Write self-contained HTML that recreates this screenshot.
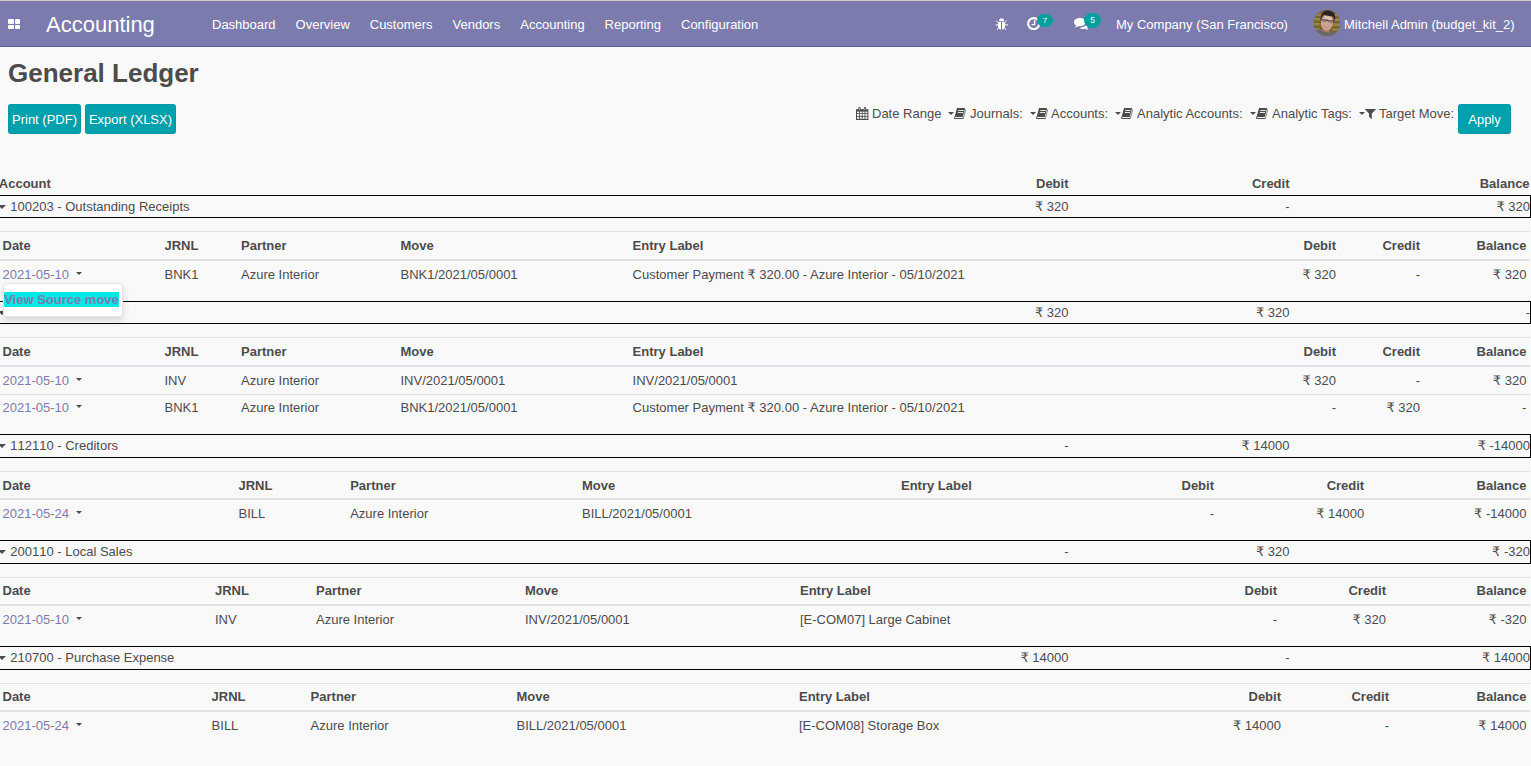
<!DOCTYPE html>
<html lang="en">
<head>
<meta charset="utf-8">
<title>General Ledger</title>
<style>
*{box-sizing:border-box}
html,body{margin:0;padding:0}
body{width:1531px;height:766px;overflow:hidden;background:#f9f9f9;color:#4c4c4c;
 font-family:"Liberation Sans",sans-serif;font-size:13px;line-height:19.5px;position:relative}
a{text-decoration:none;color:#7C7BAD}
/* navbar */
.topline{position:absolute;left:0;top:0;width:1531px;height:1px;background:#cfccc4}
.nav{position:absolute;left:0;top:1px;width:1531px;height:46px;background:#7C7BAD;border-bottom:1px solid #5f5e97;color:#fff}
.nav .it{position:absolute;top:1px;height:45px;line-height:46px;white-space:nowrap;color:#fff}
.nav .brand{font-size:22px;left:46px}
.apps{position:absolute;left:8px;top:18px;width:12px;height:11px}
.apps i{position:absolute;width:5.5px;height:4.6px;background:#fff;border-radius:1px}
.badge{position:absolute;border-radius:7px;background:#00A09D;color:#fff;text-align:center;padding:0}
.avatar{position:absolute;left:1314px;top:9px;width:26px;height:26px;border-radius:50%;overflow:hidden;background:#7a5a3c}
/* header */
h1{position:absolute;left:8px;top:58px;margin:0;font-size:26px;line-height:31px;font-weight:bold;color:#4c4c4c;white-space:nowrap}
.btn{position:absolute;top:104px;height:30px;background:#00A0AD;border:1px solid #0098A5;border-radius:2.400px;color:#fff;font-size:13px;line-height:30px;text-align:center;white-space:nowrap}
.flt{position:absolute;top:104px;height:19px;line-height:19px;white-space:nowrap;color:#4c4c4c}
.caret{position:absolute;width:0;height:0;border-left:3.1px solid transparent;border-right:3.1px solid transparent;border-top:3.4px solid #4c4c4c}
.ico{position:absolute}
u{font-family:"DejaVu Sans",sans-serif;text-decoration:none}
/* main table */
.mh{position:absolute;left:0;width:1531px;height:20px;font-weight:bold;line-height:19.5px}
.mh span,.acc span,.sh span,.sr span{position:absolute;top:0;white-space:nowrap}
.acc{position:absolute;left:-1px;width:1532px;border:1px solid #000;line-height:19.5px}
.acc span{top:1px}
.acc .caret{left:-1.600px;top:8.500px;border-left-width:4.100px;border-right-width:4.100px;border-top-width:4.700px}
.acc .nk{font-kerning:none}
.sr.bt span{top:3.300px}
.r{text-align:right}
.sh{position:absolute;left:0;width:1529.500px;border-top:1px solid #dee2e6;border-bottom:2px solid #dee2e6;font-weight:bold;line-height:19.5px}
.sh span{top:4.100px}
.sr{position:absolute;left:0;width:1529.500px;height:27px;line-height:19.5px}
.sr span{top:4.300px}
.sr.bt{border-top:1px solid #dee2e6;height:28px}
.sr a .c{display:inline-block;width:0;height:0;border-left:3.050px solid transparent;border-right:3.050px solid transparent;border-top:3.400px solid #4c4c4c;margin-left:3.200px;vertical-align:4.300px}
.dd{position:absolute;left:3px;top:283px;width:120.200px;height:34px;background:#fff;border:1px solid #e1e4ea;border-radius:3.500px;box-shadow:0 4px 7px rgba(0,0,0,.13)}
.dd b{position:absolute;left:-0.100px;top:7.800px;height:15.100px;line-height:15.100px;background:#00e9e4;color:#7C7BAD;font-weight:bold;white-space:nowrap;padding:0 .2px 0 .25px}
</style>
</head>
<body>
<div class="topline"></div>
<div class="nav">
 <div class="apps"><i style="left:0;top:0"></i><i style="left:6.5px;top:0"></i><i style="left:0;top:5.8px"></i><i style="left:6.5px;top:5.8px"></i></div>
 <div class="it brand">Accounting</div>
 <div class="it" style="left:212px">Dashboard</div>
 <div class="it" style="left:295.600px">Overview</div>
 <div class="it" style="left:369.750px">Customers</div>
 <div class="it" style="left:452.500px">Vendors</div>
 <div class="it" style="left:520.300px">Accounting</div>
 <div class="it" style="left:604.600px">Reporting</div>
 <div class="it" style="left:681px">Configuration</div>
 <!-- bug -->
 <svg class="ico" style="left:995px;top:16.700px" width="13.400" height="12.600" viewBox="0 0 13.400 12.600"><g fill="#fff"><path d="M4.100 3.200a2.500 2.900 0 0 1 5 0z"/><path d="M3 4.100h3v7.500h-.5a2.500 2.500 0 0 1-2.500-2.500zM7 4.100h3v5a2.500 2.500 0 0 1-2.500 2.500h-.5z"/></g><g stroke="#fff" stroke-width="1" fill="none"><path d="M.500 6.900h2.600M10 6.900h2.900M1.200 2.600l2.100 2M11.800 2.600l-2.100 2M1.700 11.900l1.700-1.400M11.300 11.900l-1.700-1.400"/></g></svg>
 <!-- clock -->
 <svg class="ico" style="left:1027.100px;top:15.600px" width="13.300" height="13.300" viewBox="0 0 13 13"><circle cx="6.500" cy="6.500" r="5.400" fill="none" stroke="#fff" stroke-width="2.100"/><path d="M7.400 3.200v4.200H4.500" fill="none" stroke="#fff" stroke-width="1.300"/></svg>
 <div class="badge" style="left:1037px;top:12.600px;width:16px;height:13.800px;line-height:13.800px;font-size:8px">7</div>
 <!-- comments -->
 <svg class="ico" style="left:1073.500px;top:16.800px" width="15" height="12" viewBox="0 0 15 12"><g fill="#fff"><path d="M5.900 0C2.600 0 0 1.900 0 4.200c0 1.300.8 2.400 2.100 3.200-.2.800-.7 1.500-1.300 2.100 1.400-.1 2.600-.6 3.500-1.400.5.100 1 .2 1.600.2 3.300 0 5.900-1.900 5.900-4.200S9.200 0 5.900 0z"/><path d="M12.800 9.800c1.300-.7 2.200-1.800 2.200-3.100 0-1.200-.8-2.300-2-3 .1.300.1.500.1.800 0 2.900-3.200 5.200-7.200 5.200h-.5c1 .8 2.500 1.300 4.200 1.300.6 0 1.100-.1 1.600-.2.900.7 2 1.100 3.300 1.200-.6-.6-1.100-1.300-1.300-2.100z"/></g></svg>
 <div class="badge" style="left:1084px;top:12px;width:17px;height:15px;line-height:15px;font-size:8.500px;border-radius:7.500px">5</div>
 <div class="it" style="left:1116px">My Company (San Francisco)</div>
 <div class="avatar">
  <svg width="26" height="26" viewBox="0 0 26 26"><rect width="26" height="26" fill="#75622f"/><g fill="#9c8846"><rect x="0" y="3.500" width="8" height="2.200"/><rect x="18" y="4" width="8" height="2.200"/><rect x="0" y="8" width="6" height="2.400"/><rect x="20" y="8.500" width="6" height="2.600"/><rect x="0" y="13" width="5.500" height="2.400"/><rect x="19.500" y="13.500" width="6.500" height="2.600"/><rect x="18" y="18.500" width="7" height="2.200"/><rect x="1" y="18" width="4.500" height="1.800"/></g><g transform="rotate(9 13 13)"><path d="M1 28c.5-6 4-7.500 7-8l10 0c3 .5 6 2 6.500 8z" fill="#6b6a62"/><rect x="9.500" y="17" width="7" height="5" fill="#a47b68"/><ellipse cx="13" cy="12.600" rx="6.200" ry="7.800" fill="#cda393"/><ellipse cx="13" cy="8" rx="4.500" ry="2.600" fill="#e0bcae"/><path d="M6 10.500c-1-7 3-10 7.200-10s8.600 3 6.800 10c-.5-2.700-1.200-4.200-2.200-5-3 .6-7 .5-9.300-.3-1.200 1-2 2.600-2.500 5.300z" fill="#2a2422"/><rect x="6.300" y="9.700" width="13.400" height="1.200" fill="#3e3636"/><rect x="7.400" y="9.700" width="4.600" height="2.700" rx="1" fill="#8a7672"/><rect x="14" y="9.700" width="4.600" height="2.700" rx="1" fill="#8a7672"/><path d="M9.800 15.600c1.500 1.800 4.900 1.800 6.400 0-1 2.600-5.400 2.600-6.400 0z" fill="#a85a58"/><path d="M10.500 15.900c1.500.9 3.600.9 5 0-1 1-4 1-5 0z" fill="#f3e6e0"/></g></svg>
 </div>
 <div class="it" style="left:1344px">Mitchell Admin (budget_kit_2)</div>
</div>

<h1>General Ledger</h1>
<div class="btn" style="left:8px;width:73px">Print (PDF)</div>
<div class="btn" style="left:85px;width:91px">Export (XLSX)</div>

<!-- filters -->
<svg class="ico" style="left:856.200px;top:107px" width="12.400" height="13" viewBox="0 0 12.400 13"><path fill="#4c4c4c" d="M0 2.200h12.400v10.800h-12.400z"/><g fill="#f9f9f9"><rect x="1" y="4.600" width="2" height="1.600"/><rect x="3.800" y="4.600" width="2" height="1.600"/><rect x="6.600" y="4.600" width="2" height="1.600"/><rect x="9.400" y="4.600" width="2" height="1.600"/><rect x="1" y="7" width="2" height="1.900"/><rect x="3.800" y="7" width="2" height="1.900"/><rect x="6.600" y="7" width="2" height="1.900"/><rect x="9.400" y="7" width="2" height="1.900"/><rect x="1" y="9.800" width="2" height="2"/><rect x="3.800" y="9.800" width="2" height="2"/><rect x="6.600" y="9.800" width="2" height="2"/><rect x="9.400" y="9.800" width="2" height="2"/></g><rect x="2.300" y="0" width="2.300" height="3.900" rx="1.100" fill="#4c4c4c"/><rect x="7.800" y="0" width="2.300" height="3.900" rx="1.100" fill="#4c4c4c"/><rect x="3.100" y="0.800" width=".7" height="2.400" fill="#cfcfcf"/><rect x="8.600" y="0.800" width=".7" height="2.400" fill="#cfcfcf"/></svg>
<div class="flt" style="left:872px">Date Range</div>
<div class="caret" style="left:948px;top:112px"></div>
<svg class="ico bk" style="left:954.2px;top:107.900px" width="12.200" height="11.200" viewBox="0 0 12.200 11.200"><path fill="#4c4c4c" d="M3 0h8.100l-2.400 9.050h-8.100z"/><path fill="#f9f9f9" opacity=".9" d="M4.400 1.900h5.300l-.250 1h-5.300zM3.900 3.900h5.300l-.250 1h-5.300z"/><path fill="#4c4c4c" d="M.700 8.800c-1.100.600-.700 2.350.5 2.350h7.700l.3-1.050h-7.800c-.4 0-.5-.5-.1-1.050z"/><path d="M11.750 1.300l-2.500 9.500" stroke="#4c4c4c" stroke-width=".7" fill="none"/></svg>
<div class="flt" style="left:970px">Journals:</div>
<div class="caret" style="left:1030px;top:112px"></div>
<svg class="ico bk" style="left:1035.9px;top:107.900px" width="12.200" height="11.200" viewBox="0 0 12.200 11.200"><path fill="#4c4c4c" d="M3 0h8.100l-2.400 9.050h-8.100z"/><path fill="#f9f9f9" opacity=".9" d="M4.400 1.900h5.300l-.250 1h-5.300zM3.900 3.900h5.300l-.250 1h-5.300z"/><path fill="#4c4c4c" d="M.700 8.800c-1.100.600-.700 2.350.5 2.350h7.700l.3-1.050h-7.800c-.4 0-.5-.5-.1-1.050z"/><path d="M11.750 1.300l-2.500 9.500" stroke="#4c4c4c" stroke-width=".7" fill="none"/></svg>
<div class="flt" style="left:1051px">Accounts:</div>
<div class="caret" style="left:1115px;top:112px"></div>
<svg class="ico bk" style="left:1121.3px;top:107.900px" width="12.200" height="11.200" viewBox="0 0 12.200 11.200"><path fill="#4c4c4c" d="M3 0h8.100l-2.400 9.050h-8.100z"/><path fill="#f9f9f9" opacity=".9" d="M4.400 1.900h5.300l-.250 1h-5.300zM3.900 3.900h5.300l-.250 1h-5.300z"/><path fill="#4c4c4c" d="M.700 8.800c-1.100.600-.700 2.350.5 2.350h7.700l.3-1.050h-7.800c-.4 0-.5-.5-.1-1.050z"/><path d="M11.750 1.300l-2.500 9.500" stroke="#4c4c4c" stroke-width=".7" fill="none"/></svg>
<div class="flt" style="left:1137px">Analytic Accounts:</div>
<div class="caret" style="left:1250px;top:112px"></div>
<svg class="ico bk" style="left:1256.3px;top:107.900px" width="12.200" height="11.200" viewBox="0 0 12.200 11.200"><path fill="#4c4c4c" d="M3 0h8.100l-2.400 9.050h-8.100z"/><path fill="#f9f9f9" opacity=".9" d="M4.400 1.900h5.300l-.250 1h-5.300zM3.900 3.900h5.300l-.250 1h-5.300z"/><path fill="#4c4c4c" d="M.700 8.800c-1.100.600-.700 2.350.5 2.350h7.700l.3-1.050h-7.800c-.4 0-.5-.5-.1-1.050z"/><path d="M11.750 1.300l-2.500 9.500" stroke="#4c4c4c" stroke-width=".7" fill="none"/></svg>
<div class="flt" style="left:1272px">Analytic Tags:</div>
<div class="caret" style="left:1359px;top:112px"></div>
<svg class="ico" style="left:1365.100px;top:108.700px" width="11" height="10.400" viewBox="0 0 11 10.400"><path fill="#4c4c4c" d="M0 0h10.900v.3l-4.100 4.300v5.800l-2.800-2.600v-3.200l-4-4.300z"/></svg>
<div class="flt" style="left:1379px">Target Move:</div>
<div class="btn" style="left:1458px;width:53px">Apply</div>

<!-- main table -->
<div class="mh" style="top:174px"><span style="left:-1.200px">Account</span><span class="r" style="right:462.5px">Debit</span><span class="r" style="right:241.5px">Credit</span><span class="r" style="right:1.4px">Balance</span></div>
<div class="acc" style="top:195px;height:23px"><i class="caret"></i><span class="t nk" style="left:10.300px">100203 - Outstanding Receipts</span><span class="t r" style="right:461.5px"><u>₹</u> 320</span><span class="t r" style="right:240.5px">-</span><span class="t r" style="right:0px"><u>₹</u> 320</span></div>
<div class="sh" style="top:231px;height:30px"><span style="left:2.5px">Date</span><span style="left:164.5px">JRNL</span><span style="left:241px">Partner</span><span style="left:400.5px">Move</span><span style="left:632.6px">Entry Label</span><span class="r" style="right:193.5px">Debit</span><span class="r" style="right:109.5px">Credit</span><span class="r" style="right:3.1px">Balance</span></div>
<div class="sr" style="top:261px"><span style="left:2.5px"><a>2021-05-10 <i class="c"></i></a></span><span style="left:164.5px">BNK1</span><span style="left:241px">Azure Interior</span><span style="left:400.5px">BNK1/2021/05/0001</span><span style="left:632.6px">Customer Payment <u>₹</u> 320.00 - Azure Interior - 05/10/2021</span><span class="r" style="right:193.5px"><u>₹</u> 320</span><span class="r" style="right:109.5px">-</span><span class="r" style="right:3.1px"><u>₹</u> 320</span></div>
<div class="acc" style="top:301px;height:23px"><i class="caret"></i><span class="t nk" style="left:10.300px">110100 - Debtors</span><span class="t r" style="right:461.5px"><u>₹</u> 320</span><span class="t r" style="right:240.5px"><u>₹</u> 320</span><span class="t r" style="right:0px">-</span></div>
<div class="sh" style="top:337px;height:30px"><span style="left:2.5px">Date</span><span style="left:164.5px">JRNL</span><span style="left:241px">Partner</span><span style="left:400.5px">Move</span><span style="left:632.6px">Entry Label</span><span class="r" style="right:193.5px">Debit</span><span class="r" style="right:109.5px">Credit</span><span class="r" style="right:3.1px">Balance</span></div>
<div class="sr" style="top:367px"><span style="left:2.5px"><a>2021-05-10 <i class="c"></i></a></span><span style="left:164.5px">INV</span><span style="left:241px">Azure Interior</span><span style="left:400.5px">INV/2021/05/0001</span><span style="left:632.6px">INV/2021/05/0001</span><span class="r" style="right:193.5px"><u>₹</u> 320</span><span class="r" style="right:109.5px">-</span><span class="r" style="right:3.1px"><u>₹</u> 320</span></div>
<div class="sr bt" style="top:394px"><span style="left:2.5px"><a>2021-05-10 <i class="c"></i></a></span><span style="left:164.5px">BNK1</span><span style="left:241px">Azure Interior</span><span style="left:400.5px">BNK1/2021/05/0001</span><span style="left:632.6px">Customer Payment <u>₹</u> 320.00 - Azure Interior - 05/10/2021</span><span class="r" style="right:193.5px">-</span><span class="r" style="right:109.5px"><u>₹</u> 320</span><span class="r" style="right:3.1px">-</span></div>
<div class="acc" style="top:434px;height:24px"><i class="caret"></i><span class="t nk" style="left:10.300px">112110 - Creditors</span><span class="t r" style="right:461.5px">-</span><span class="t r" style="right:240.5px"><u>₹</u> 14000</span><span class="t r" style="right:0px"><u>₹</u> -14000</span></div>
<div class="sh" style="top:471px;height:29px"><span style="left:2.5px">Date</span><span style="left:238.5px">JRNL</span><span style="left:350.2px">Partner</span><span style="left:582px">Move</span><span style="left:901px">Entry Label</span><span class="r" style="right:315.5px">Debit</span><span class="r" style="right:165.3px">Credit</span><span class="r" style="right:3.1px">Balance</span></div>
<div class="sr" style="top:500px"><span style="left:2.5px"><a>2021-05-24 <i class="c"></i></a></span><span style="left:238.5px">BILL</span><span style="left:350.2px">Azure Interior</span><span style="left:582px">BILL/2021/05/0001</span><span style="left:901px"></span><span class="r" style="right:315.5px">-</span><span class="r" style="right:165.3px"><u>₹</u> 14000</span><span class="r" style="right:3.1px"><u>₹</u> -14000</span></div>
<div class="acc" style="top:540px;height:24px"><i class="caret"></i><span class="t nk" style="left:10.300px">200110 - Local Sales</span><span class="t r" style="right:461.5px">-</span><span class="t r" style="right:240.5px"><u>₹</u> 320</span><span class="t r" style="right:0px"><u>₹</u> -320</span></div>
<div class="sh" style="top:577px;height:29px"><span style="top:3.1px;left:2.5px">Date</span><span style="top:3.1px;left:215px">JRNL</span><span style="top:3.1px;left:316px">Partner</span><span style="top:3.1px;left:525px">Move</span><span style="top:3.1px;left:800px">Entry Label</span><span class="r" style="top:3.1px;right:252.5px">Debit</span><span class="r" style="top:3.1px;right:143.5px">Credit</span><span class="r" style="top:3.1px;right:3.1px">Balance</span></div>
<div class="sr" style="top:606px"><span style="left:2.5px"><a>2021-05-10 <i class="c"></i></a></span><span style="left:215px">INV</span><span style="left:316px">Azure Interior</span><span style="left:525px">INV/2021/05/0001</span><span style="left:800px">[E-COM07] Large Cabinet</span><span class="r" style="right:252.5px">-</span><span class="r" style="right:143.5px"><u>₹</u> 320</span><span class="r" style="right:3.1px"><u>₹</u> -320</span></div>
<div class="acc" style="top:646px;height:24px"><i class="caret"></i><span class="t nk" style="left:10.300px">210700 - Purchase Expense</span><span class="t r" style="right:461.5px"><u>₹</u> 14000</span><span class="t r" style="right:240.5px">-</span><span class="t r" style="right:0px"><u>₹</u> 14000</span></div>
<div class="sh" style="top:683px;height:29px"><span style="top:3.1px;left:2.5px">Date</span><span style="top:3.1px;left:211.6px">JRNL</span><span style="top:3.1px;left:310.6px">Partner</span><span style="top:3.1px;left:516.5px">Move</span><span style="top:3.1px;left:799px">Entry Label</span><span class="r" style="top:3.1px;right:248.5px">Debit</span><span class="r" style="top:3.1px;right:140.5px">Credit</span><span class="r" style="top:3.1px;right:3.1px">Balance</span></div>
<div class="sr" style="top:712px"><span style="left:2.5px"><a>2021-05-24 <i class="c"></i></a></span><span style="left:211.6px">BILL</span><span style="left:310.6px">Azure Interior</span><span style="left:516.5px">BILL/2021/05/0001</span><span style="left:799px">[E-COM08] Storage Box</span><span class="r" style="right:248.5px"><u>₹</u> 14000</span><span class="r" style="right:140.5px">-</span><span class="r" style="right:3.1px"><u>₹</u> 14000</span></div>
<div class="dd"><b>View Source move</b></div>
</body>
</html>
